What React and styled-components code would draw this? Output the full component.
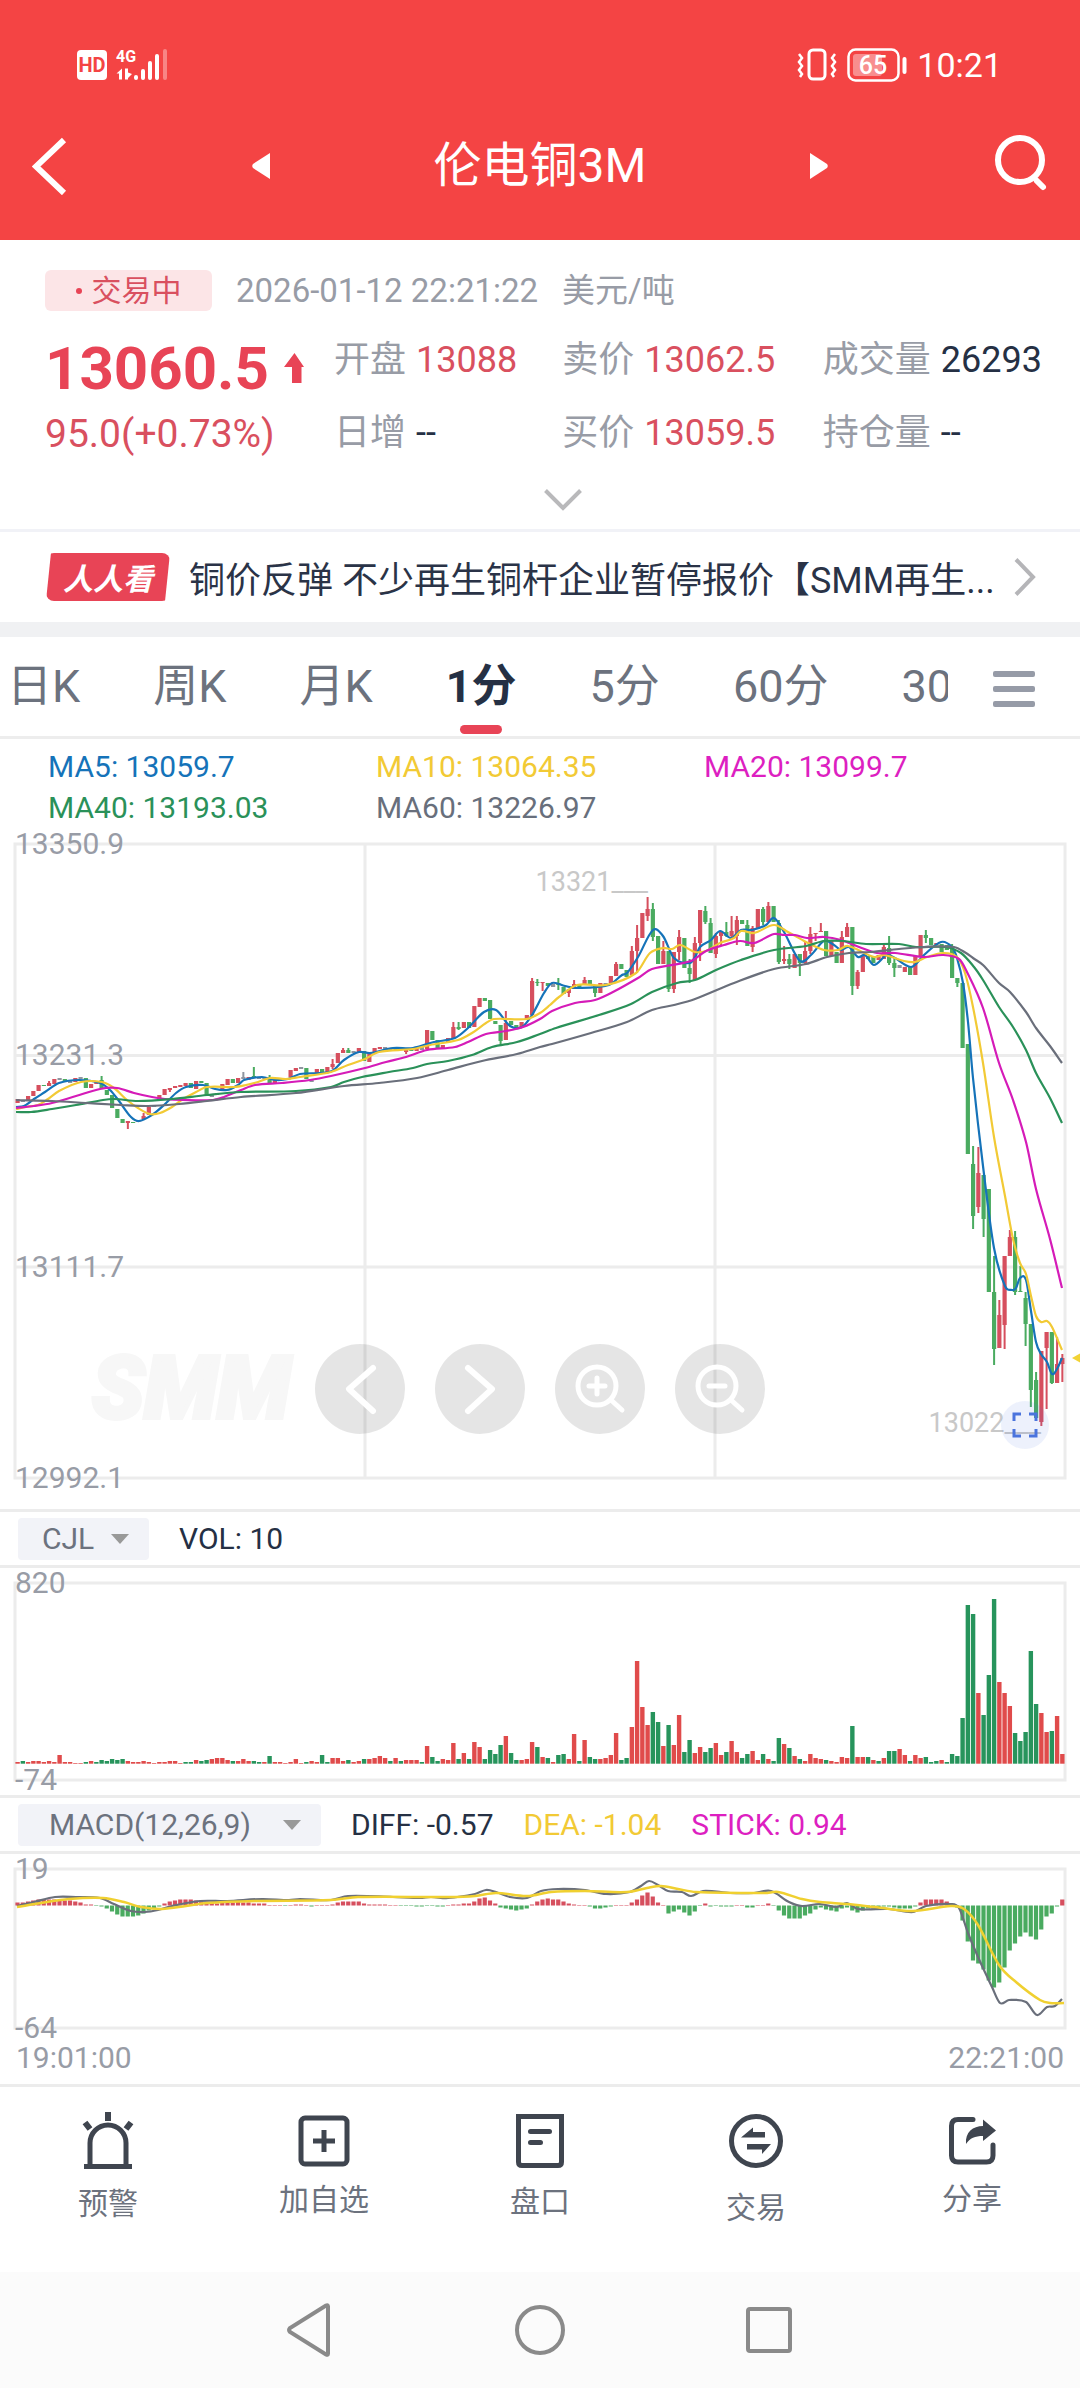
import React from "react";
import styled, { createGlobalStyle } from "styled-components";

const STEP = 5.25;

// open/close and high/low of every minute, measured down from the top of the price chart
// "colour bodyTop bodyBottom [high low]"
const CANDLES = `r 255 259|x 256 258|r 252 256|r 247 252|r 241 247|g 241 242|r 239 242 237 242|r 235 240|x 234 236|g 235 238
x 237 239|r 234 238|x 233 235|g 234 244|r 240 244|r 237 240|g 236 244 232 244|g 246 251|g 251 264|g 265 274
g 275 279|r 277 279 277 285|g 278 279|r 276 278|r 272 275 269 275|r 263 271|x 261 263|r 251 255|r 245 251|r 244 246 244 248
r 242 244|r 241 243|r 239 242|g 239 244|r 237 245|g 237 239|g 239 252|x 251 253|x 249 251|r 240 246
r 235 241|g 235 239|r 234 239|x 233 235 228 235|r 233 236|g 232 233 223 234|x 233 235|x 233 235|g 234 239 231 239|r 236 239
x 235 237|x 234 236|r 226 233|r 224 227|x 223 225|g 224 235|x 235 238|r 225 230|g 225 229|r 223 229
r 220 223 215 225|r 209 219|r 206 209 204 209|g 206 209 204 209|x 207 209|r 204 208|g 207 217|r 209 218|r 204 208|r 203 205
x 203 205|x 204 206|g 204 206|x 204 206|r 205 208 205 210|g 204 207|r 204 207|x 203 206|r 186 205|g 187 196
g 196 205|r 201 205|r 194 198|r 183 194 178 194|g 183 185 178 186|r 178 184|g 178 184|r 162 183|r 154 163|g 154 157
g 156 175|g 177 180|g 181 197 181 201|r 179 196 167 196|g 177 181|g 181 184|r 178 183|r 171 175|r 137 171 134 171|g 138 139 135 142
r 138 139 138 147|g 139 142|x 140 143|g 139 141 134 146|g 143 150|r 145 149 145 153|r 140 145 136 145|g 140 143|r 136 140 133 141|g 136 140
g 141 149 141 153|r 139 149|x 139 141|r 132 139|r 120 132 118 132|g 120 125|g 126 133|r 107 131 102 131|r 94 107 81 129|r 69 94
r 65 72 53 77|g 65 93 59 97|g 92 120|r 107 120 97 120|g 107 145 107 148|r 108 145 108 149|r 93 108 86 116|g 94 124|g 124 130 115 139|r 99 136 93 136
r 66 99 66 117|g 67 78 62 80|g 79 109 74 109|r 92 110 89 114|r 88 92 88 101|g 88 92 78 93|r 87 92 72 94|r 76 92 72 101|g 76 80|g 81 102 76 102
r 84 103 82 108|r 65 84|g 65 78 63 81|r 62 78 58 78|g 62 78|g 79 118 76 120|r 115 117 102 120|g 115 120 110 125|r 110 124|g 110 119 110 132
r 107 119 98 120|r 90 107 83 110|r 89 90 89 97|r 87 88 79 88|g 87 112|r 96 112|g 108 119|r 93 119 87 119|r 83 93 79 93|g 83 142 83 151
r 128 142 126 145|r 112 128|g 112 115|g 112 119|r 111 116|r 103 115 99 115|g 104 119 92 121|g 119 124 114 133|x 121 124|r 123 128
g 122 131|r 112 131|r 91 112|g 91 94 86 99|g 94 101|r 99 101|g 100 108|g 101 106|g 103 134 100 134|g 134 139 134 143
g 139 204|g 200 310|g 320 372 302 385|r 329 363 303 369|g 331 375 331 393|g 345 448|g 448 505 412 521|r 471 504 456 504|r 412 481 412 505|r 393 412 386 412
g 393 448 387 451|g 447 448 422 448|g 454 480 448 502|g 480 546 480 563|g 536 574 528 574|r 507 578 507 582|r 488 504 488 565|g 488 539 488 540|r 520 539 493 539|r 514 520 510 538`
  .split(/[|\n]/)
  .map((row) => {
    const [side, ...values] = row.split(" ");
    const [top, bottom, high = top, low = bottom] = values.map(Number);
    return { side, top, bottom, high, low };
  });

const AVERAGES = [
  {
    color: "#1573b9",
    points:
      "1,263 9,262 19,255 30,248 44,239 64,236 85,239 95,246 104,257 116,273 124,277 137,271 149,261 161,249 171,243 188,241 200,245 212,246 223,241 229,236 247,233 260,236 273,235 285,230 305,229 317,227 329,216 344,208 355,209 378,204 398,204 419,198 440,194 453,184 469,168 481,166 495,182 507,183 517,171 529,149 537,139 550,142 562,144 594,141 607,131 612,129 623,113 638,86 648,92 659,114 675,119 680,113 685,103 696,96 705,87 716,94 726,86 737,86 751,81 759,74 769,88 785,117 796,111 809,97 819,101 826,106 834,103 843,113 850,111 859,121 873,111 896,123 909,111 926,98 937,103 942,114 948,139 953,178 958,234 968,322 979,404 990,442 997,446 1001,444 1005,434 1011,436 1016,467 1021,498 1026,510 1032,518 1037,530 1042,525 1047,514",
  },
  {
    color: "#f2ca35",
    points:
      "1,265 11,263 23,261 33,255 44,247 66,238 87,238 99,244 112,256 123,264 135,270 145,269 157,263 168,255 181,248 192,243 219,243 231,241 243,238 255,234 271,235 285,233 316,228 333,221 350,215 364,208 398,205 415,201 443,196 457,189 471,179 479,175 512,175 525,169 535,161 544,153 562,141 591,141 621,129 635,109 648,104 657,105 665,101 680,108 691,107 705,99 719,94 726,87 739,89 759,81 773,88 791,98 809,106 823,106 833,102 859,113 869,111 889,117 900,118 912,113 928,109 942,113 950,129 958,163 968,219 979,293 990,352 998,395 1005,419 1011,430 1016,452 1021,472 1026,478 1032,477 1037,483 1047,506",
  },
  {
    color: "#d51bb8",
    points:
      "1,264 19,262 37,259 61,252 85,245 102,244 119,249 137,253 150,255 168,256 198,256 209,253 226,246 240,241 267,239 295,236 316,232 350,224 371,218 391,213 412,206 440,203 453,198 471,190 491,187 508,183 525,175 537,167 560,159 580,156 598,148 623,134 637,125 676,117 691,107 709,101 725,97 739,99 759,90 769,91 780,91 792,94 809,93 826,96 844,103 862,109 880,109 909,113 928,111 944,115 951,126 968,164 984,219 998,256 1011,298 1021,345 1035,395 1047,444",
  },
  {
    color: "#2a9159",
    points:
      "1,268 16,268 37,265 61,261 88,256 99,255 123,257 157,255 192,251 226,248 281,247 316,243 329,238 347,233 374,228 398,224 412,220 433,217 457,211 477,203 502,198 525,190 541,184 584,171 616,160 637,148 662,139 680,136 701,126 726,116 759,106 791,102 809,97 828,97 851,100 884,100 901,103 930,103 946,109 959,123 968,136 984,163 998,183 1011,206 1021,229 1035,254 1047,279",
  },
  {
    color: "#6a6f7b",
    points:
      "1,256 37,257 71,259 106,261 133,262 164,260 192,257 226,253 281,249 329,242 364,239 402,234 433,226 467,217 502,210 525,203 537,200 576,189 612,178 637,166 659,161 680,155 719,139 759,125 791,120 812,113 834,109 855,108 884,105 909,103 939,103 951,109 958,114 968,121 984,139 995,148 1011,168 1021,184 1035,202 1047,219",
  },
];

const VOLUMES =
  "r1 g2 r1 r2 r2 r1 r2 r1 r8 r1 r1 r0 r0 g1 r2 g1 g3 g2 g4 g3 g4 r2 r1 r1 r2 r1 r0 r1 r1 r2 r2 r0 g1 g1 r3 g2 g3 r4 r5 r5 r3 g2 r2 r4 r2 g2 g1 r1 g7 r1 r1 r0 r1 r4 r0 g1 r2 r1 g8 g1 r5 r5 r2 g3 r1 r2 g4 r4 r5 r7 r5 g2 r5 g2 r3 r3 r3 g1 r17 g6 g2 r4 r3 r20 g4 r10 g4 r21 r16 g4 g13 g9 g18 r27 g10 g3 r3 r4 r21 g16 r6 g5 r1 g8 g9 r4 r29 g2 r23 g6 g4 r4 r5 r8 r30 g3 g5 r36 r102 r56 r38 g51 g41 r17 g38 r18 r48 g11 g23 r10 r16 g11 g15 r20 r8 g11 r22 r11 g5 g9 r12 r3 g9 r4 g2 g25 r19 g15 r7 g4 r2 r9 r5 r4 g3 r2 r1 r6 r5 g37 r6 r6 g6 r3 g2 r5 g12 g12 r14 r8 g2 r8 r5 g6 g1 g2 r3 g1 g9 g7 g45 g158 g149 r70 g48 g88 g164 r81 r70 r57 g30 g22 g31 g112 g59 r50 r31 g32 r47 r9"
    .split(" ")
    .map((v) => ({ side: v[0], size: Number(v.slice(1)) }));

const STICKS = [
  3, 3, 4, 5, 6, 6, 6, 6, 5, 5, 5, 4, 3, 1, 1, -0.5, -1, -3, -6, -9, -11, -11,
  -11, -10, -8, -5, -3, -1, 2, 4, 5, 6, 6, 6, 5, 5, 4, 3, 2, 3, 3, 3, 4, 3, 3,
  2, 2, 2, 0.5, 0.5, 0.5, -0.5, 0.5, 1, 1, 0.5, -1, 0.5, 0.5, 0.5, 1, 3, 4, 4,
  4, 4, 2, 1, 1, 1, 1, 0.5, 0.5, -0.5, -0.5, -0.5, -1, -1, -0.5, -0.5, -1, -1,
  0.5, 1, 1, 2, 2, 4, 7, 8, 5, 2, -2, -3, -4, -5, -4, -3, 1, 4, 6, 7, 6, 6, 4,
  2, 1, 0.5, 0.5, -1, -3, -3, -2, -1, 0.5, 0.5, 0.5, 3, 6, 10, 13, 9, 3, 0.5,
  -8, -6, -4, -7, -10, -6, -0.5, 2, -1, -0.5, -1, -1, -1, 0.5, 0.5, -2, -2, 0.5,
  0.5, 2, -0.5, -5, -10, -13, -13, -13, -10, -8, -4, -2, -4, -5, -6, -3, -2, -5,
  -7, -5, -3, -3, -2, -1, -1, -2, -3, -3, -3, -1, 3, 6, 6, 6, 6, 4, 0.5, -2,
  -15, -36, -55, -58, -64, -75, -82, -77, -62, -45, -38, -31, -27, -31, -34,
  -24, -11, -8, -1, 6,
];

const DIFF =
  "2,37 19,33 40,28 61,28 85,29 99,35 116,42 130,43 143,41 157,37 185,32 212,32 247,30 274,31 285,30 316,31 333,27 378,28 405,29 416,28 433,29 460,25 471,21 481,23 495,28 512,29 526,22 543,20 570,21 591,25 615,23 626,17 634,12 643,16 653,22 667,23 676,27 688,22 715,24 739,24 756,22 774,33 787,37 805,35 822,38 832,34 843,40 874,40 898,43 911,37 936,35 944,39 953,64 963,88 977,118 985,134 994,131 1011,133 1022,146 1032,138 1040,137 1047,130";
const DEA =
  "2,38 26,34 54,30 88,29 109,33 126,38 147,40 171,37 192,34 240,32 316,31 343,28 433,28 460,27 481,24 512,27 536,23 570,22 612,23 632,19 646,17 663,20 681,23 750,24 763,23 787,30 805,33 832,35 860,38 898,42 936,37 949,40 963,56 984,96 1001,113 1025,131 1035,134 1049,134";

// rounded curve through every point
function toCurve(points) {
  const p = points.split(" ").map((pair) => pair.split(",").map(Number));
  let d = `M${p[0]}`;
  for (let i = 0; i < p.length - 1; i++) {
    const before = p[i - 1] || p[i];
    const after = p[i + 2] || p[i + 1];
    const step = (p[i + 1][0] - p[i][0]) / 3;
    const slopeA = (p[i + 1][1] - before[1]) / (p[i + 1][0] - before[0]);
    const slopeB = (after[1] - p[i][1]) / (after[0] - p[i][0]);
    d += `C${p[i][0] + step},${p[i][1] + slopeA * step} ${p[i + 1][0] - step},${p[i + 1][1] - slopeB * step} ${p[i + 1]}`;
  }
  return d;
}

const CANDLE_COLORS = { r: "#d64f5e", g: "#4aab60", x: "#8f959f" };
const VOLUME_COLORS = { r: "#e04b4b", g: "#27945c" };

const PERIODS = ["日K", "周K", "月K", "1分", "5分", "60分", "30分"];

const LEGEND = [
  { text: "MA5: 13059.7", color: "#1573b9" },
  { text: "MA10: 13064.35", color: "#f2ca35" },
  { text: "MA20: 13099.7", color: "#dd1fc1" },
  { text: "MA40: 13193.03", color: "#2a9159" },
  { text: "MA60: 13226.97", color: "#686f7c" },
];

const STATS = [
  { label: "开盘", value: "13088", color: "#d9505f" },
  { label: "卖价", value: "13062.5", color: "#d9505f" },
  { label: "成交量", value: "26293", color: "#253044" },
  { label: "日增", value: "--", color: "#253044" },
  { label: "买价", value: "13059.5", color: "#d9505f" },
  { label: "持仓量", value: "--", color: "#253044" },
];

function StatusBar() {
  return (
    <Status>
      <svg width="92" height="34" viewBox="0 0 92 34" fill="#fff">
        <rect x="0" y="2" width="30" height="30" rx="4" />
        <SvgText x="15" y="24" fontSize="20" fontWeight="700" fill="#f44444" textAnchor="middle">
          HD
        </SvgText>
        <SvgText x="39" y="14" fontSize="16" fontWeight="700">
          4G
        </SvgText>
        <path d="M45 20.500v11h-3v-6h-2.500zM48 20.500h3v4l4 1.500-4 4v1.500h-3z" />
        <rect x="57" y="27" width="4" height="5" rx="2" />
        <rect x="64" y="21" width="4" height="11" rx="2" />
        <rect x="71" y="13" width="4" height="19" rx="2" />
        <rect x="78" y="6" width="4" height="26" rx="2" />
        <rect x="86" y="1" width="4" height="31" rx="2" opacity="0.35" />
      </svg>
      <StatusGroup>
        <svg width="40" height="34" viewBox="0 0 40 34" fill="none" stroke="#fff" strokeWidth="3">
          <rect x="12" y="2" width="16" height="29" rx="4" />
          <path d="M2 6l3 4-3 4 3 4-3 4 3 4-2 3M38 6l-3 4 3 4-3 4 3 4-3 4 2 3" strokeWidth="2.500" />
        </svg>
        <svg width="60" height="34" viewBox="0 0 60 34" fill="none">
          <rect x="1.500" y="1.500" width="50" height="31" rx="7" stroke="#fff" strokeWidth="2.500" />
          <rect x="6" y="6" width="29" height="22" rx="3" fill="#fff" opacity="0.4" />
          <rect x="55.500" y="9" width="4" height="17" rx="2" fill="#fff" />
          <SvgText x="26" y="26" fontSize="25" fontWeight="500" fill="#fff" textAnchor="middle">
            65
          </SvgText>
        </svg>
        <Clock>10:21</Clock>
      </StatusGroup>
    </Status>
  );
}

function PriceChart() {
  return (
    <PricePanel>
      <ChartSvg $height={634} viewBox="0 0 1050 634">
        <g stroke="#ececec" strokeWidth="3" fill="none">
          <rect x="0" y="0" width="1050" height="634" />
          <path d="M0 211.500H1050M0 423H1050M350 0V634M700 0V634" />
        </g>
        <SvgText
          x="77"
          y="574"
          fontSize="86"
          fontWeight="900"
          fontStyle="italic"
          fill="#f7f7f7"
          stroke="#f7f7f7"
          strokeWidth="4"
        >
          SMM
        </SvgText>
        {CANDLES.map((c, i) => {
          const x = 2.6 + i * STEP;
          return (
            <g key={i} fill={CANDLE_COLORS[c.side]}>
              <rect x={x - 1} y={c.high} width="2" height={c.low - c.high} />
              <rect x={x - 2.1} y={c.top} width="4.2" height={c.bottom - c.top} />
            </g>
          );
        })}
        {AVERAGES.map((line) => (
          <path
            key={line.color}
            d={toCurve(line.points)}
            fill="none"
            stroke={line.color}
            strokeWidth="2.2"
            strokeLinejoin="round"
          />
        ))}
        <SvgText x="633" y="47" fontSize="27" fill="#c8c8c8" textAnchor="end">
          13321___
        </SvgText>
        <SvgText x="1026" y="588" fontSize="27" fill="#c8c8c8" textAnchor="end">
          13022___
        </SvgText>
        <path d="M1057 514l9-5v10z" fill="#f2d335" />
      </ChartSvg>
      <AxisLabel $top="0%">13350.9</AxisLabel>
      <AxisLabel $top="33.33%">13231.3</AxisLabel>
      <AxisLabel $top="66.66%">13111.7</AxisLabel>
      <AxisLabel $top="100%">12992.1</AxisLabel>
      <ChartControls>
        <RoundButton aria-label="左移">
          <path d="M58 24L34 45L58 67" strokeWidth="6" />
        </RoundButton>
        <RoundButton aria-label="右移">
          <path d="M33 24L57 45L33 67" strokeWidth="6" />
        </RoundButton>
        <RoundButton aria-label="放大">
          <circle cx="42" cy="42" r="19" />
          <path d="M56 56L67 66M34 42H50M42 34V50" />
        </RoundButton>
        <RoundButton aria-label="缩小">
          <circle cx="42" cy="42" r="19" />
          <path d="M56 56L67 66M34 42H50" />
        </RoundButton>
      </ChartControls>
      <FullscreenButton aria-label="全屏">
        <svg width="26" height="26" viewBox="0 0 26 26" fill="none" stroke="#4b74dd" strokeWidth="3">
          <path d="M2 9V2H9M17 2H24V9M24 17V24H17M9 24H2V17" />
        </svg>
      </FullscreenButton>
    </PricePanel>
  );
}

function RoundButton({ children, ...props }) {
  return (
    <Round {...props}>
      <svg
        width="90"
        height="90"
        viewBox="0 0 90 90"
        fill="none"
        stroke="#fff"
        strokeWidth="5"
        strokeLinecap="round"
        strokeLinejoin="round"
      >
        {children}
      </svg>
    </Round>
  );
}

function VolumeChart() {
  return (
    <IndicatorPanel>
      <ChartSvg $height={197} viewBox="0 0 1050 197">
        <rect x="0" y="0" width="1050" height="197" stroke="#ececec" strokeWidth="3" fill="none" />
        {VOLUMES.map((v, i) => (
          <rect
            key={i}
            x={0.4 + i * STEP}
            y={180 - v.size}
            width="4.4"
            height={v.size + 0.7}
            fill={VOLUME_COLORS[v.side]}
          />
        ))}
      </ChartSvg>
      <AxisLabel $top="0%">820</AxisLabel>
      <AxisLabel $top="100%">-74</AxisLabel>
    </IndicatorPanel>
  );
}

function MacdChart() {
  return (
    <IndicatorPanel>
      <ChartSvg $height={159} viewBox="0 0 1050 159">
        <rect x="0" y="0" width="1050" height="159" stroke="#ececec" strokeWidth="3" fill="none" />
        {STICKS.map((v, i) => (
          <rect
            key={i}
            x={0.4 + i * STEP}
            y={v > 0 ? 36.5 - v : 36.5}
            width="4.2"
            height={Math.abs(v)}
            fill={v > 0 ? CANDLE_COLORS.r : CANDLE_COLORS.g}
          />
        ))}
        <path d={toCurve(DIFF)} fill="none" stroke="#6a6f7b" strokeWidth="2.200" />
        <path d={toCurve(DEA)} fill="none" stroke="#f0d030" strokeWidth="2.500" />
      </ChartSvg>
      <AxisLabel $top="0%">19</AxisLabel>
      <AxisLabel $top="100%">-64</AxisLabel>
    </IndicatorPanel>
  );
}

function IndicatorSelect({ label, value, left, right }) {
  return (
    <SelectBox>
      <Select aria-label={label} defaultValue={value} $left={left} $right={right}>
        <option>{value}</option>
      </Select>
      <Caret viewBox="0 0 18 10">
        <path d="M0 0H18L9 10Z" fill="#999" />
      </Caret>
    </SelectBox>
  );
}

const ACTIONS = [
  {
    label: "预警",
    height: 70,
    icon: (
      <>
        <path d="M6 56.500H54M12 54V33a18 18 0 0 1 36 0V54" />
        <path d="M30 2V11M7 12.500L12 19M53 12.500L48 19" strokeWidth="6" />
      </>
    ),
  },
  {
    label: "加自选",
    height: 66,
    icon: (
      <>
        <rect x="7" y="8" width="46" height="46" rx="4" />
        <path d="M19 31H41M30 20V42" />
      </>
    ),
  },
  {
    label: "盘口",
    height: 68,
    icon: (
      <>
        <path d="M8.500 6.500H51.500V52q0 3.500-3.500 3.500H12q-3.500 0-3.500-3.500Z" />
        <path d="M20.500 21.500H39.500M20.500 32.500H30.500" strokeLinecap="round" />
      </>
    ),
  },
  {
    label: "交易",
    height: 74,
    icon: (
      <>
        <circle cx="30" cy="31" r="24.500" />
        <path
          d="M15 27.500L27 17.500V22H39V27.500ZM21 34H45L36 44V39.500H21Z"
          fill="#3f454f"
          stroke="none"
        />
      </>
    ),
  },
  {
    label: "分享",
    height: 65,
    icon: (
      <>
        <path
          d="M31 9.500H16q-6.500 0-6.500 6.500V45.500q0 6.500 6.500 6.500H44.500q6.500 0 6.500-6.500V35"
          strokeLinecap="round"
        />
        <path d="M24 34C23 22 31 16 41 16V9.500L54 20.500L41 31V26C33 26 28 28 24 34Z" fill="#3f454f" stroke="none" />
      </>
    ),
  },
];

function App() {
  return (
    <Page>
      <GlobalStyle />
      <Header>
        <StatusBar />
        <NavBar>
          <PlainButton aria-label="返回">
            <svg width="36" height="58" viewBox="0 0 36 58" fill="none" stroke="#fff" strokeWidth="6">
              <path d="M32 3L4 29.500L32 56" />
            </svg>
          </PlainButton>
          <TitleGroup>
            <PlainButton aria-label="上一个">
              <svg width="18" height="26" viewBox="0 0 18 26" fill="#fff">
                <path d="M18 0V26L1 15q-1.500-2 0-4Z" />
              </svg>
            </PlainButton>
            <Title>伦电铜3M</Title>
            <PlainButton aria-label="下一个">
              <svg width="18" height="26" viewBox="0 0 18 26" fill="#fff">
                <path d="M0 0V26L17 15q1.500-2 0-4Z" />
              </svg>
            </PlainButton>
          </TitleGroup>
          <SearchButton aria-label="搜索">
            <svg width="54" height="64" viewBox="0 0 54 64" fill="none" stroke="#fff" strokeWidth="6">
              <circle cx="26" cy="26" r="22" />
              <path d="M43 47L49 53" strokeLinecap="round" />
            </svg>
          </SearchButton>
        </NavBar>
      </Header>

      <Quote>
        <QuoteMeta>
          <TradingBadge>
            <Dot />
            交易中
          </TradingBadge>
          <span>2026-01-12 22:21:22</span>
          <span>美元/吨</span>
        </QuoteMeta>
        <QuoteBody>
          <PriceColumn>
            <Price>
              13060.5
              <svg width="20" height="30" viewBox="0 0 20 30" fill="#e84456">
                <path d="M10.500 0L20 14H17.500V30H8V14H0Z" />
              </svg>
            </Price>
            <Change>95.0(+0.73%)</Change>
          </PriceColumn>
          <StatGrid>
            {STATS.map((s) => (
              <Stat key={s.label}>
                <dt>{s.label}</dt>
                <StatValue $color={s.color}>{s.value}</StatValue>
              </Stat>
            ))}
          </StatGrid>
        </QuoteBody>
        <ExpandButton aria-label="展开">
          <svg width="38" height="22" viewBox="0 0 38 22" fill="none" stroke="#b9b9bb" strokeWidth="4">
            <path d="M1.500 1.500L19 19L36.500 1.500" />
          </svg>
        </ExpandButton>
      </Quote>

      <News href="#news">
        <NewsTag>人人看</NewsTag>
        <Headline>铜价反弹 不少再生铜杆企业暂停报价【SMM再生...</Headline>
        <svg width="22" height="38" viewBox="0 0 22 38" fill="none" stroke="#b5b5b8" strokeWidth="4">
          <path d="M2 1.500L19 19L2 36.500" />
        </svg>
      </News>

      <PeriodBar>
        <Periods>
          {PERIODS.map((p) => (
            <Period key={p} $active={p === "1分"}>
              {p}
            </Period>
          ))}
        </Periods>
        <MenuButton aria-label="更多周期">
          <MenuLine />
          <MenuLine />
          <MenuLine />
        </MenuButton>
      </PeriodBar>

      <Legend>
        {LEGEND.map((l) => (
          <Reading key={l.text} $color={l.color}>
            {l.text}
          </Reading>
        ))}
      </Legend>
      <PriceChart />

      <Toolbar>
        <IndicatorSelect label="副图一" value="CJL" left={24} right={54} />
        <Reading $color="#253044">VOL: 10</Reading>
      </Toolbar>
      <VolumeChart />

      <Toolbar>
        <IndicatorSelect label="副图二" value="MACD(12,26,9)" left={31} right={70} />
        <Reading $color="#253044">DIFF: -0.57</Reading>
        <Reading $color="#f2ca35">DEA: -1.04</Reading>
        <Reading $color="#dd1fc1">STICK: 0.94</Reading>
      </Toolbar>
      <MacdChart />
      <TimeAxis>
        <span>19:01:00</span>
        <span>22:21:00</span>
      </TimeAxis>

      <Actions>
        {ACTIONS.map((a) => (
          <Action key={a.label}>
            <svg
              width="60"
              height={a.height}
              viewBox={`0 0 60 ${a.height}`}
              fill="none"
              stroke="#3f454f"
              strokeWidth="5"
            >
              {a.icon}
            </svg>
            {a.label}
          </Action>
        ))}
      </Actions>

      <SystemNav>
        <PlainButton aria-label="系统返回">
          <SystemIcon>
            <path d="M42 4.500V51.500q0 2-2 1L4 30q-2-2 0-4L40 3.500q2-1 2 1Z" />
          </SystemIcon>
        </PlainButton>
        <PlainButton aria-label="主屏幕">
          <SystemIcon>
            <circle cx="25" cy="28" r="23" />
          </SystemIcon>
        </PlainButton>
        <PlainButton aria-label="最近任务">
          <SystemIcon>
            <rect x="4" y="7" width="42" height="42" rx="2" />
          </SystemIcon>
        </PlainButton>
      </SystemNav>
    </Page>
  );
}

export default App;

const GlobalStyle = createGlobalStyle`
  * {
    box-sizing: border-box;
  }
  body {
    margin: 0;
    background: #fff;
    font-family: Roboto, "Noto Sans CJK SC", sans-serif;
  }
  button,
  select {
    font-family: inherit;
  }
  svg {
    display: block;
    flex-shrink: 0;
  }
`;

const Page = styled.div`
  display: flex;
  flex-direction: column;
  min-height: 100vh;
  overflow: hidden;
  background: #fff;
`;

const SvgText = styled.text`
  font-family: Roboto, sans-serif;
`;

const Header = styled.header`
  background: #f44444;
  color: #fff;
`;

const Status = styled.div`
  display: flex;
  align-items: flex-end;
  justify-content: space-between;
  height: 92px;
  padding: 0 78px 10px 77px;
`;

const StatusGroup = styled.div`
  display: flex;
  align-items: center;
  gap: 10px;
`;

const Clock = styled.span`
  font-size: 34px;
  line-height: 34px;
`;

const NavBar = styled.nav`
  display: grid;
  grid-template-columns: 1fr auto 1fr;
  align-items: center;
  height: 148px;
  padding: 0 32px;
`;

const PlainButton = styled.button`
  display: flex;
  padding: 0;
  border: 0;
  background: none;
`;

const SearchButton = styled(PlainButton)`
  justify-self: end;
`;

const TitleGroup = styled.div`
  display: flex;
  align-items: center;
  justify-content: space-between;
  width: 576px;
`;

const Title = styled.h1`
  margin: 0;
  font-size: 48px;
  font-weight: 400;
  line-height: 60px;
`;

const Quote = styled.section`
  padding: 30px 36px 0 45px;
  border-bottom: 3px solid #f1f2f7;
`;

const QuoteMeta = styled.div`
  display: flex;
  align-items: center;
  height: 41px;
  gap: 24px;
  font-size: 33px;
  line-height: 41px;
  color: #989ca6;
`;

const TradingBadge = styled.span`
  display: flex;
  align-items: center;
  justify-content: center;
  gap: 10px;
  width: 167px;
  height: 41px;
  border-radius: 6px;
  background: #fce5e7;
  color: #d9505f;
  font-size: 30px;
`;

const Dot = styled.i`
  width: 6px;
  height: 6px;
  border-radius: 50%;
  background: #e84456;
`;

const QuoteBody = styled.div`
  display: flex;
  padding-top: 13px;
`;

const PriceColumn = styled.div`
  width: 289px;
  padding-top: 8px;
`;

const Price = styled.div`
  display: flex;
  align-items: center;
  justify-content: space-between;
  height: 72px;
  padding-right: 30px;
  color: #e84456;
  font-size: 60px;
  font-weight: 700;
`;

const Change = styled.div`
  color: #d9505f;
  font-size: 39px;
  line-height: 60px;
`;

const StatGrid = styled.dl`
  display: grid;
  flex: 1;
  grid-template-columns: 228fr 260fr 221fr;
  grid-auto-rows: 73px;
  margin: 0;
`;

const Stat = styled.div`
  display: flex;
  align-items: baseline;
  gap: 10px;
  color: #989ca6;
  font-size: 36px;
  line-height: 73px;
  white-space: nowrap;
`;

const StatValue = styled.dd`
  margin: 0;
  color: ${(props) => props.$color};
`;

const ExpandButton = styled.button`
  display: flex;
  align-items: center;
  justify-content: center;
  width: 100%;
  height: 59px;
  padding: 0 0 0 36px;
  border: 0;
  background: none;
`;

const News = styled.a`
  display: flex;
  align-items: center;
  height: 105px;
  padding: 0 44px 0 46px;
  border-bottom: 15px solid #f0f1f3;
  color: #2a3347;
  text-decoration: none;
`;

const NewsTag = styled.span`
  display: flex;
  align-items: center;
  justify-content: center;
  width: 124px;
  height: 48px;
  border-radius: 8px;
  background: #e84456;
  color: #fff;
  font-size: 30px;
  font-weight: 700;
  font-style: italic;
  clip-path: polygon(4% 0, 100% 0, 96% 100%, 0 100%);
`;

const Headline = styled.span`
  flex: 1;
  min-width: 0;
  margin: 0 12px 0 19px;
  overflow: hidden;
  font-size: 36px;
  text-overflow: ellipsis;
  white-space: nowrap;
`;

const PeriodBar = styled.div`
  display: flex;
  height: 102px;
  border-bottom: 3px solid #ededed;
`;

const Periods = styled.div`
  display: flex;
  flex: 1;
  gap: 73px;
  min-width: 0;
  padding-left: 7px;
  overflow: hidden;
`;

const Period = styled.button`
  position: relative;
  flex-shrink: 0;
  padding: 0 0 8px;
  border: 0;
  background: none;
  color: ${(props) => (props.$active ? "#253044" : "#6c727e")};
  font-size: 45px;
  font-weight: ${(props) => (props.$active ? 700 : 400)};
  white-space: nowrap;

  &::after {
    content: "";
    position: absolute;
    bottom: 2px;
    left: 50%;
    display: ${(props) => (props.$active ? "block" : "none")};
    width: 42px;
    height: 9px;
    margin-left: -21px;
    border-radius: 5px;
    background: #e84456;
  }
`;

const MenuButton = styled.button`
  display: flex;
  flex-direction: column;
  align-items: center;
  justify-content: center;
  gap: 9px;
  width: 132px;
  padding: 4px 0 0;
  border: 0;
  background: none;
`;

const MenuLine = styled.i`
  width: 42px;
  height: 6px;
  border-radius: 2px;
  background: #969ba7;
`;

const Legend = styled.div`
  display: grid;
  grid-template-columns: repeat(3, 1fr);
  grid-auto-rows: 41px;
  align-items: center;
  padding: 7px 48px 0;
`;

const Reading = styled.span`
  color: ${(props) => props.$color};
  font-size: 30px;
`;

const IndicatorPanel = styled.div`
  position: relative;
  margin: 15px;
`;

const PricePanel = styled(IndicatorPanel)`
  margin: 16px 15px 31px;
`;

const ChartSvg = styled.svg`
  width: 100%;
  height: ${(props) => props.$height}px;
  overflow: visible;
`;

const AxisLabel = styled.span`
  position: absolute;
  top: ${(props) => props.$top};
  left: 0;
  color: #989ca6;
  font-size: 30px;
  line-height: 30px;
  transform: translateY(-50%);
`;

const ChartControls = styled.div`
  position: absolute;
  bottom: 44px;
  left: 50%;
  display: flex;
  gap: 30px;
  transform: translateX(-50%);
`;

const Round = styled.button`
  padding: 0;
  border: 0;
  border-radius: 50%;
  background: rgba(0, 0, 0, 0.1);
`;

const FullscreenButton = styled.button`
  position: absolute;
  right: 16px;
  bottom: 29px;
  display: flex;
  align-items: center;
  justify-content: center;
  width: 48px;
  height: 48px;
  padding: 0;
  border: 0;
  border-radius: 50%;
  background: rgba(75, 116, 221, 0.1);
`;

const Toolbar = styled.div`
  display: flex;
  align-items: center;
  gap: 30px;
  height: 59px;
  padding: 0 18px;
  border-top: 3px solid #ececec;
  border-bottom: 3px solid #ececec;
`;

const SelectBox = styled.div`
  position: relative;
`;

const Select = styled.select`
  display: block;
  height: 42px;
  padding: 0 ${(props) => props.$right}px 0 ${(props) => props.$left}px;
  border: 0;
  border-radius: 4px;
  appearance: none;
  background: #f2f3f8;
  color: #6c727e;
  font-size: 30px;
`;

const Caret = styled.svg`
  position: absolute;
  top: 16px;
  right: 20px;
  width: 18px;
  height: 10px;
  pointer-events: none;
`;

const TimeAxis = styled.div`
  display: flex;
  justify-content: space-between;
  padding: 0 16px;
  height: 41px;
  color: #989ca6;
  font-size: 30px;
  line-height: 30px;
`;

const Actions = styled.nav`
  display: grid;
  grid-template-columns: repeat(5, 1fr);
  align-items: start;
  height: 188px;
  padding-top: 23px;
  border-top: 3px solid #ececec;
`;

const Action = styled.button`
  display: flex;
  flex-direction: column;
  align-items: center;
  gap: 6px;
  padding: 0;
  border: 0;
  background: none;
  color: #6c727e;
  font-size: 30px;
  line-height: 36px;
`;

const SystemNav = styled.footer`
  display: flex;
  flex: 1;
  align-items: center;
  justify-content: center;
  gap: 179px;
  min-height: 116px;
  background: #fbfbfb;
`;

const SystemIcon = styled.svg.attrs({
  width: 50,
  height: 56,
  viewBox: "0 0 50 56",
  fill: "none",
  stroke: "#8a8a8a",
  strokeWidth: 4,
})``;
